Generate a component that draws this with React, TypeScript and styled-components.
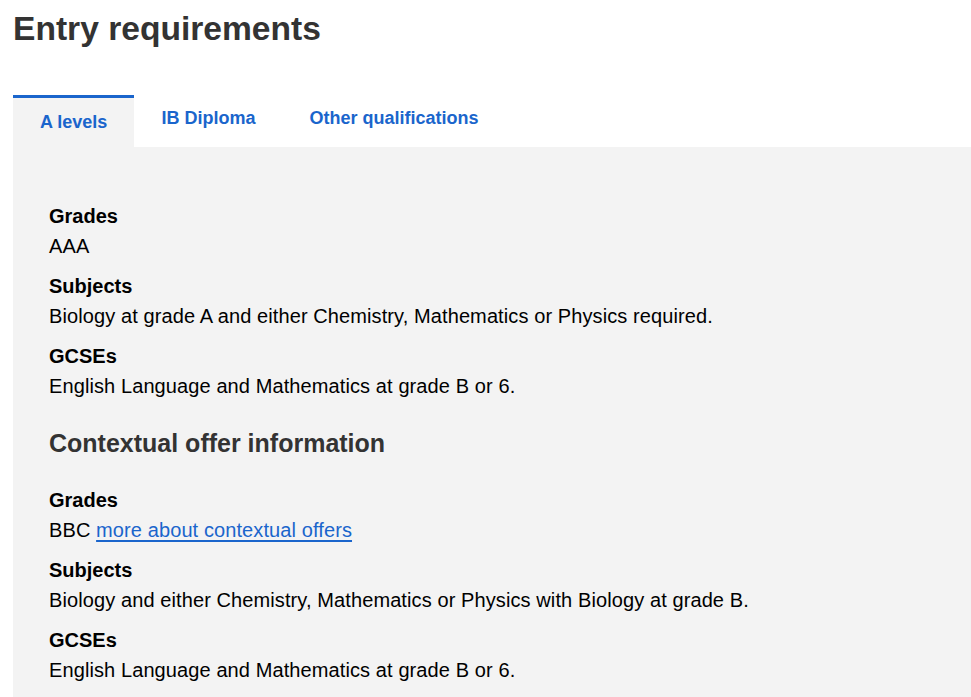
import React from "react";
import styled, { createGlobalStyle } from "styled-components";

const GlobalStyle = createGlobalStyle`
  html, body { margin: 0; padding: 0; background: #ffffff; }
  body { font-family: "Liberation Sans", Arial, sans-serif; color: #000; }
`;

const Page = styled.div`
  padding: 0 0 0 13px;
  overflow: hidden;
`;

const Title = styled.h2`
  margin: 9px 0 0;
  font-size: 33.6px;
  line-height: 39px;
  font-weight: 700;
  color: #333333;
`;

const TabList = styled.div`
  display: flex;
  align-items: stretch;
  margin-top: 47px;
`;

const Tab = styled.a<{ $active?: boolean }>`
  display: block;
  padding: ${(p) => (p.$active ? "14px 27px 14px" : "10px 27px 18px")};
  border-top: 3px solid ${(p) => (p.$active ? "#1a65cc" : "transparent")};
  background: ${(p) => (p.$active ? "#f3f3f3" : "transparent")};
  font-size: 18px;
  line-height: 21px;
  font-weight: 700;
  color: #1a65cc;
  text-decoration: none;
  cursor: pointer;
`;

const Panel = styled.div`
  background: #f3f3f3;
  padding: 54px 36px 30px;
`;

const List = styled.dl`
  margin: 0;
`;

const Label = styled.dt`
  font-size: 20px;
  line-height: 30px;
  font-weight: 700;
  color: #000;
`;

const Value = styled.dd`
  margin: 0 0 10px;
  font-size: 20px;
  line-height: 30px;
  letter-spacing: 0.1px;
  color: #000;
`;

const SubHeading = styled.h3`
  margin: 27px 0 26px;
  font-size: 25px;
  line-height: 31px;
  font-weight: 700;
  color: #333333;
`;

const Link = styled.a`
  color: #1a65cc;
  text-decoration: underline;
  text-underline-offset: 3px;
`;

type Item = { label: string; value: React.ReactNode };

const standard: Item[] = [
  { label: "Grades", value: "AAA" },
  {
    label: "Subjects",
    value: "Biology at grade A and either Chemistry, Mathematics or Physics required.",
  },
  { label: "GCSEs", value: "English Language and Mathematics at grade B or 6." },
];

const contextual: Item[] = [
  {
    label: "Grades",
    value: (
      <>
        BBC <Link href="#">more about contextual offers</Link>
      </>
    ),
  },
  {
    label: "Subjects",
    value: "Biology and either Chemistry, Mathematics or Physics with Biology at grade B.",
  },
  { label: "GCSEs", value: "English Language and Mathematics at grade B or 6." },
];

const Items = ({ items }: { items: Item[] }) => (
  <List>
    {items.map((it, i) => (
      <React.Fragment key={i}>
        <Label>{it.label}</Label>
        <Value>{it.value}</Value>
      </React.Fragment>
    ))}
  </List>
);

export default function App() {
  return (
    <Page>
      <GlobalStyle />
      <Title>Entry requirements</Title>
      <TabList>
        <Tab $active>A levels</Tab>
        <Tab>IB Diploma</Tab>
        <Tab>Other qualifications</Tab>
      </TabList>
      <Panel>
        <Items items={standard} />
        <SubHeading>Contextual offer information</SubHeading>
        <Items items={contextual} />
      </Panel>
    </Page>
  );
}
